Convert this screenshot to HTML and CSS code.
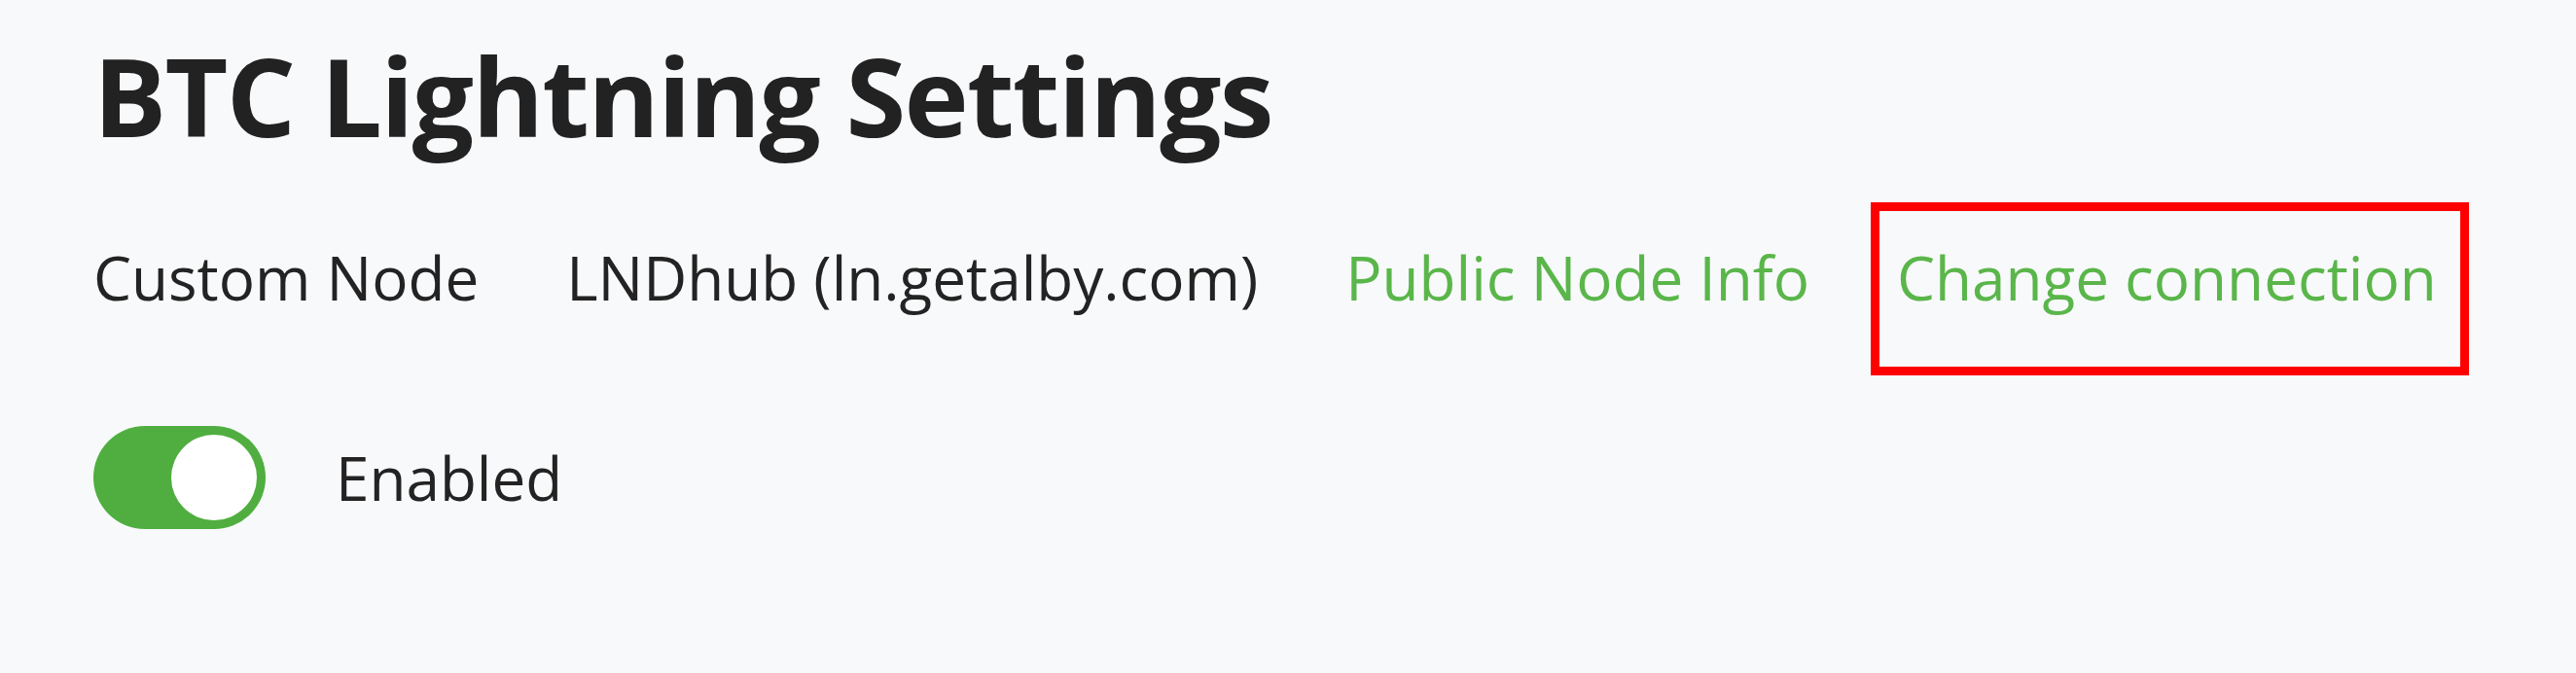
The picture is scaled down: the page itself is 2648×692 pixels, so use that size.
FILE: index.html
```html
<!DOCTYPE html>
<html lang="en">
<head>
<meta charset="utf-8">
<title>BTC Lightning Settings</title>
<link rel="stylesheet" href="styles.css">
</head>
<body>
<main class="page">
  <h1 class="title">BTC Lightning Settings</h1>
  <div class="info-row">
    <span class="info-label">Custom Node</span>
    <span class="info-value">LNDhub (ln.getalby.com)</span>
    <a class="info-link" href="#">Public Node Info</a>
    <a class="info-link highlighted" href="#">Change connection</a>
  </div>
  <div class="toggle-row">
    <span class="toggle on"><span class="knob"></span></span>
    <span class="toggle-label">Enabled</span>
  </div>
</main>
</body>
</html>
```

FILE: styles.css
```css
html, body {
  margin: 0;
  padding: 0;
  background: #f8f9fb;
}
body {
  font-family: "Open Sans", "Noto Sans", "Liberation Sans", sans-serif;
  color: #232323;
}
.page {
  padding: 31px 0 0 96px;
}
.title {
  margin: 0;
  font-size: 112px;
  font-weight: 700;
  line-height: 1.2;
  color: #222222;
  letter-spacing: -1.7px;
}
.info-row {
  margin-top: 74px;
  display: flex;
  align-items: center;
  gap: 90px;
  font-size: 62px;
  line-height: 1.5;
}
.info-link {
  color: #5ab64a;
  text-decoration: none;
}
.highlighted {
  position: relative;
}
.highlighted::after {
  content: "";
  position: absolute;
  left: -27px;
  right: -33px;
  top: -31px;
  bottom: -54px;
  border: 9px solid #ff0000;
  pointer-events: none;
}
.toggle-row {
  margin-top: 106px;
  display: flex;
  align-items: center;
  gap: 72px;
  font-size: 62px;
  line-height: 1.5;
}
.toggle {
  display: flex;
  align-items: center;
  justify-content: flex-end;
  box-sizing: border-box;
  width: 177px;
  height: 106px;
  padding: 0 9px;
  border-radius: 53px;
  background: #4fae3f;
}
.knob {
  width: 88px;
  height: 88px;
  border-radius: 50%;
  background: #ffffff;
}
```
